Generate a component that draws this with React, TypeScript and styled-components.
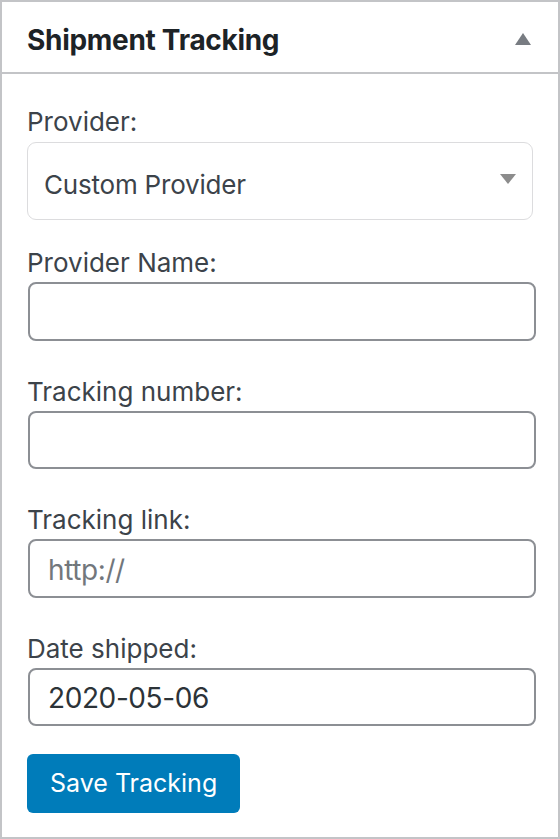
import React from 'react';
import styled, { createGlobalStyle } from 'styled-components';

const GlobalStyle = createGlobalStyle`
  html, body {
    margin: 0;
    padding: 0;
    background: #ffffff;
  }
  * {
    box-sizing: border-box;
  }
`;

const StyledPanel = styled.div`
  width: 560px;
  height: 839px;
  border: 2px solid #c3c4c7;
  background: #ffffff;
  font-family: Inter, "Liberation Sans", sans-serif;
`;

const StyledHeader = styled.div`
  height: 72px;
  display: flex;
  align-items: center;
  justify-content: space-between;
  padding: 0 27px 0 25px;
  border-bottom: 2px solid #c3c4c7;
`;

const StyledTitle = styled.h2`
  margin: 7px 0 0;
  font-size: 28px;
  line-height: 1.2;
  font-weight: 700;
  letter-spacing: -0.3px;
  color: #1d2327;
`;

const StyledToggle = styled.button`
  display: flex;
  padding: 0;
  margin-top: 3px;
  border: none;
  background-color: transparent;
`;

const StyledBody = styled.div`
  display: flex;
  flex-direction: column;
  align-items: flex-start;
  padding: 30px 22px 0 25px;
`;

const StyledField = styled.div<{ $space: number }>`
  display: flex;
  flex-direction: column;
  align-self: stretch;
  margin-bottom: ${(p) => p.$space}px;
`;

const StyledLabel = styled.label<{ $gap: number }>`
  display: block;
  font-size: 26px;
  line-height: 36px;
  color: #3c434a;
  margin-bottom: ${(p) => p.$gap}px;
`;

const StyledSelectWrap = styled.div`
  position: relative;
  width: 506px;
`;

const StyledSelect = styled.select`
  appearance: none;
  display: block;
  width: 100%;
  height: 78.5px;
  margin: 0;
  padding: 7px 40px 0 16px;
  border: 1.5px solid #dcdcde;
  border-radius: 9px;
  background: #ffffff;
  font-family: Inter, "Liberation Sans", sans-serif;
  font-size: 26px;
  letter-spacing: -0.2px;
  color: #3c434a;
  outline: none;
`;

const StyledArrow = styled.svg`
  position: absolute;
  right: 17px;
  top: 32.5px;
  pointer-events: none;
`;

const StyledInput = styled.input`
  display: block;
  height: 58.5px;
  margin: 0 0 0 1px;
  padding: 3px 18px 0;
  border: 2px solid #8c8f94;
  border-radius: 8px;
  background: #ffffff;
  font-family: Inter, "Liberation Sans", sans-serif;
  font-size: 28px;
  letter-spacing: -0.4px;
  color: #2c3338;
  outline: none;

  &::placeholder {
    color: #72777c;
  }
`;

const StyledButton = styled.button`
  height: 59.5px;
  margin-top: 0;
  padding: 0 23px;
  border: none;
  border-radius: 6px;
  background-color: #007cba;
  color: #ffffff;
  font-family: Inter, "Liberation Sans", sans-serif;
  font-size: 25px;
`;

const fields = [
  { id: 'provider-name', label: 'Provider Name:', value: '', placeholder: '' },
  { id: 'tracking-number', label: 'Tracking number:', value: '', placeholder: '' },
  { id: 'tracking-link', label: 'Tracking link:', value: '', placeholder: 'http://' },
  { id: 'date-shipped', label: 'Date shipped:', value: '2020-05-06', placeholder: '' },
];

const App = () => {
  return (
    <StyledPanel>
      <GlobalStyle />
      <StyledHeader>
        <StyledTitle>Shipment Tracking</StyledTitle>
        <StyledToggle aria-label="Toggle panel">
          <svg width="16" height="12" viewBox="0 0 16 12">
            <path d="M8 0 L16 12 L0 12 Z" fill="#787c82" />
          </svg>
        </StyledToggle>
      </StyledHeader>
      <StyledBody>
        <StyledField $space={25}>
          <StyledLabel $gap={1.5} htmlFor="provider">Provider:</StyledLabel>
          <StyledSelectWrap>
            <StyledSelect id="provider" defaultValue="custom">
              <option value="custom">Custom Provider</option>
            </StyledSelect>
            <StyledArrow width="16" height="10" viewBox="0 0 16 10">
              <path d="M0 0 L16 0 L8 10 Z" fill="#8c8c8c" />
            </StyledArrow>
          </StyledSelectWrap>
        </StyledField>
        {fields.map((f, i) => (
          <StyledField key={f.id} $space={i === fields.length - 1 ? 27.5 : 33}>
            <StyledLabel $gap={1} htmlFor={f.id}>{f.label}</StyledLabel>
            <StyledInput id={f.id} defaultValue={f.value} placeholder={f.placeholder} />
          </StyledField>
        ))}
        <StyledButton>Save Tracking</StyledButton>
      </StyledBody>
    </StyledPanel>
  );
};

export default App;
